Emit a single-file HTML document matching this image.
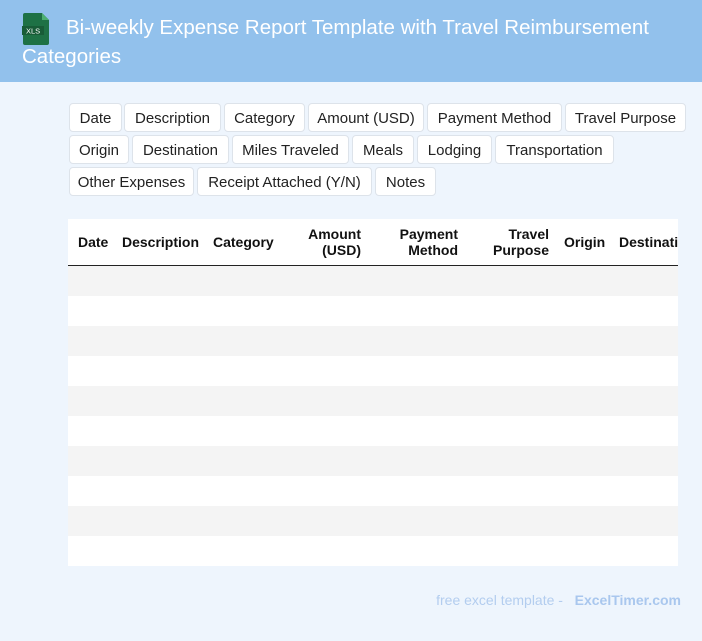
<!DOCTYPE html><html><head><style>
body{margin:0;width:702px;height:641px;background:#eef5fd;font-family:"Liberation Sans",Arial,sans-serif;position:relative;overflow:hidden}
.hd{position:absolute;left:0;top:0;width:702px;height:82px;background:#92c1ec}
.hd h1{position:absolute;left:22px;top:13px;margin:0;font-weight:normal;font-size:20.5px;line-height:29px;color:#fff;width:670px;text-indent:44px}
.tag{position:absolute;height:29px;line-height:30px;background:#fff;border:1px solid #dde3ea;border-radius:4px;box-sizing:border-box;text-align:center;font-size:15px;color:#222}
.tbl{position:absolute;left:68px;top:219px;width:610px;height:347px;background:#fff;overflow:hidden}
.th{position:absolute;font-weight:bold;font-size:14px;color:#111;line-height:16px}
.row{position:absolute;left:0;width:610px;height:30px}
.ft{position:absolute;right:21px;top:592px;font-size:14px;color:#b3cdef}
</style></head><body>
<div class="hd">
<svg style="position:absolute;left:22px;top:13px" width="28" height="32" viewBox="0 0 28 32"><path d="M3 0h17l7 7v23a2 2 0 0 1-2 2H3a2 2 0 0 1-2-2V2a2 2 0 0 1 2-2z" fill="#1e7145"/><path d="M20 0v7h7z" fill="#4caf72"/><rect x="0" y="13" width="22" height="9" fill="#185c37"/><text x="4" y="20.5" font-size="7.5" fill="#fff" font-family="Liberation Sans">XLS</text></svg>
<h1>Bi-weekly Expense Report Template with Travel Reimbursement Categories</h1></div>
<div class="tag" style="left:69px;top:103px;width:53px">Date</div>
<div class="tag" style="left:124px;top:103px;width:97px">Description</div>
<div class="tag" style="left:224px;top:103px;width:81px">Category</div>
<div class="tag" style="left:308px;top:103px;width:116px">Amount (USD)</div>
<div class="tag" style="left:427px;top:103px;width:135px">Payment Method</div>
<div class="tag" style="left:565px;top:103px;width:121px">Travel Purpose</div>
<div class="tag" style="left:69px;top:135px;width:60px">Origin</div>
<div class="tag" style="left:132px;top:135px;width:97px">Destination</div>
<div class="tag" style="left:232px;top:135px;width:117px">Miles Traveled</div>
<div class="tag" style="left:352px;top:135px;width:62px">Meals</div>
<div class="tag" style="left:417px;top:135px;width:75px">Lodging</div>
<div class="tag" style="left:495px;top:135px;width:119px">Transportation</div>
<div class="tag" style="left:69px;top:167px;width:125px">Other Expenses</div>
<div class="tag" style="left:197px;top:167px;width:175px">Receipt Attached (Y/N)</div>
<div class="tag" style="left:375px;top:167px;width:61px">Notes</div>
<div class="tbl">
<div class="th" style="left:10px;top:15px">Date</div>
<div class="th" style="left:54px;top:15px">Description</div>
<div class="th" style="left:145px;top:15px">Category</div>
<div class="th" style="right:317px;top:7px;text-align:right">Amount<br>(USD)</div>
<div class="th" style="right:220px;top:7px;text-align:right">Payment<br>Method</div>
<div class="th" style="right:129px;top:7px;text-align:right">Travel<br>Purpose</div>
<div class="th" style="left:496px;top:15px">Origin</div>
<div class="th" style="left:551px;top:15px;white-space:nowrap">Destination</div>
<div style="position:absolute;left:0;top:46px;width:610px;height:1px;background:#222"></div>
<div class="row" style="top:47px;background:#f4f4f4"></div>
<div class="row" style="top:107px;background:#f4f4f4"></div>
<div class="row" style="top:167px;background:#f4f4f4"></div>
<div class="row" style="top:227px;background:#f4f4f4"></div>
<div class="row" style="top:287px;background:#f4f4f4"></div>
</div>
<div class="ft">free excel template - &nbsp; <b style="color:#a9c7ee">ExcelTimer.com</b></div>
</body></html>
